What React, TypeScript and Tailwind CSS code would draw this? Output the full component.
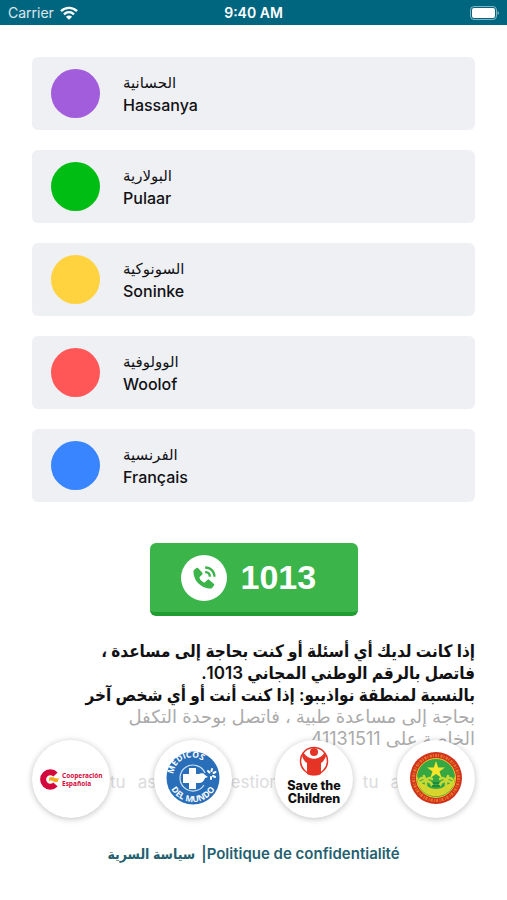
import { useId } from "react";
import { BiSolidPhoneCall } from "react-icons/bi";

const languages = [
    { arabic: "الحسانية", latin: "Hassanya", dot: "bg-[#a25ddc]" },
    { arabic: "البولارية", latin: "Pulaar", dot: "bg-[#00bd13]" },
    { arabic: "السونوكية", latin: "Soninke", dot: "bg-[#ffd33f]" },
    { arabic: "الوولوفية", latin: "Woolof", dot: "bg-[#ff5757]" },
    { arabic: "الفرنسية", latin: "Français", dot: "bg-[#3885ff]" }
];

function StatusBar() {
    return (
        <header className="grid h-[25px] grid-cols-3 items-center bg-[#00667f] px-2 text-sm text-white">
            <div className="flex items-center gap-1.5">
                <span className="text-white/85">Carrier</span>
                <svg viewBox="0 0 18 14" className="h-3.5 w-[18px]" fill="none" stroke="currentColor" strokeWidth="2.4">
                    <path d="M1 5.2C5.5.7 12.5.7 17 5.2" />
                    <path d="M4 8.3c2.9-2.7 7.1-2.7 10 0" />
                    <path d="M9 13.8 5.9 10.7c1.7-1.7 4.5-1.7 6.2 0Z" fill="currentColor" stroke="none" />
                </svg>
            </div>
            <span className="text-center font-semibold">9:40 AM</span>
            <svg viewBox="0 0 30 14" className="h-3.5 w-[30px] justify-self-end">
                <rect x="1.5" y="0.5" width="26" height="13" rx="3.5" fill="none" stroke="#fff" strokeOpacity="0.5" />
                <rect x="3" y="2" width="23" height="10" rx="2" fill="#fff" />
                <path d="M28.5 5v4c2-1 2-3 0-4Z" fill="#fff" fillOpacity="0.5" />
            </svg>
        </header>
    );
}

function CooperacionLogo() {
    return (
        <svg viewBox="0 0 78 78" className="size-full" role="img" aria-label="Cooperación Española">
            <path d="M23.5 34.5A7.200 7.200 0 1 0 23.500 44.500" fill="none" stroke="#d3073b" strokeWidth="6" />
            <path d="M17 38c4-3 6 2 10 0l-1.500 4c-4 1-5-3-8.500-1Z" fill="#f6a821" />
            <g fill="#d3073b" fontFamily="Open Sans, sans-serif" fontWeight="700" fontSize="6.5">
                <text x="30" y="38">Cooperación</text>
                <text x="30" y="46">Española</text>
            </g>
        </svg>
    );
}

function MedicosLogo() {
    const id = useId();
    return (
        <svg viewBox="0 0 78 78" className="size-full" role="img" aria-label="Médicos del Mundo">
            <defs>
                <path id={id + "top"} d="M21 43A18 18 0 0 1 54 28" />
                <path id={id + "bottom"} d="M14 37a25 25 0 0 0 50 0" />
            </defs>
            <circle cx="39" cy="38" r="26.5" fill="#286eb9" />
            <path d="M50 45a13 13 0 1 1 1-12" fill="none" stroke="#cfe4f6" strokeWidth="1.2" />
            <path d="M35 28h7v6h3c2-1 5-1 6 1l3 2-3 1c-1 3-3 5-6 5h-3v6h-7v-6h-6v-9h6Z" fill="#fff" />
            <g fill="none" stroke="#fff" strokeWidth="2" strokeLinecap="round">
                <path d="m58 29-.5 2M61.500 32l-2 1M61 37l-2-1M57 39v-2M54 31l1.500 1.500" />
            </g>
            <g fill="#fff" fontFamily="Open Sans, sans-serif" fontWeight="700" fontSize="8.5" textAnchor="middle">
                <text><textPath href={"#" + id + "top"} startOffset="50%">MÉDICOS</textPath></text>
                <text><textPath href={"#" + id + "bottom"} startOffset="50%">DEL MUNDO</textPath></text>
            </g>
        </svg>
    );
}

function SaveTheChildrenLogo() {
    return (
        <svg viewBox="0 0 78 78" className="size-full" role="img" aria-label="Save the Children">
            <circle cx="39" cy="21" r="13.5" fill="none" stroke="#e53426" strokeWidth="1.5" />
            <circle cx="39" cy="12" r="4" fill="#e53426" />
            <path d="M28 12c2 3 4 5 7 6 2 1 6 1 8 0 3-1 5-3 7-6l1 4c-1 3-3 6-5 7v11c-4 2-10 2-14 0V23c-2-1-4-4-5-7Z" fill="#e53426" />
            <g fill="#111" fontFamily="Inter, sans-serif" fontWeight="800" fontSize="12.5" textAnchor="middle">
                <text x="39" y="50">Save the</text>
                <text x="39" y="63">Children</text>
            </g>
        </svg>
    );
}

function MauritaniaSeal() {
    return (
        <svg viewBox="0 0 78 78" className="size-full" role="img" aria-label="الجمهورية الإسلامية الموريتانية">
            <circle cx="39" cy="38" r="26" fill="#d0321c" />
            <circle cx="39" cy="38" r="22.5" fill="none" stroke="#e8752a" strokeWidth="3" strokeDasharray="2 1 1 1.5" />
            <circle cx="39" cy="38" r="19.5" fill="#35a844" stroke="#efc52d" strokeWidth="1" />
            <path d="M20 36c0 27 38 27 38 0-2 5-5 8-9 9-3 3-7 4-10 4s-7-1-10-4c-4-1-7-4-9-9Z" fill="#d9d52c" />
            <path d="m39 21 2.200 6.500H48l-5.500 4 2.200 6.500-5.700-4-5.700 4 2.200-6.500-5.500-4h6.800Z" fill="#f7e52b" />
            <g fill="none" stroke="#c6d833" strokeWidth="2.5" strokeLinecap="round">
                <path d="M29 52V41m0 0c-1-3-4-4-6-2m6 2c1-3 4-4 6-2m-6 2c-3 0-6 1-7 4m7-4c3 0 5 1 6 4m-6-4-2-5" />
                <path d="M49 52V41m0 0c-1-3-4-4-6-2m6 2c1-3 4-4 6-2m-6 2c-3 0-5 1-6 4m6-4c3 0 6 1 7 4m-7-4 2-5" />
            </g>
            <path d="M36 43h6m-7 3h8" stroke="#187f37" strokeWidth="1.5" />
        </svg>
    );
}

const partners = [CooperacionLogo, MedicosLogo, SaveTheChildrenLogo, MauritaniaSeal];

export default function App() {
    return (
        <div className="min-h-screen bg-white font-['Inter','DejaVu_Sans',sans-serif] text-[#111114]">
            <StatusBar />
            <main className="px-8 pt-8">
                <div className="flex flex-col gap-5">
                    {languages.map((language) => (
                        <button key={language.latin} type="button" className="flex h-[73px] w-full items-center gap-[23px] rounded-md bg-[#eff0f4] px-[19px] text-left text-base font-medium leading-[22px]">
                            <span className={`size-[49px] shrink-0 rounded-full ${language.dot}`}></span>
                            <span className="flex flex-col items-start">
                                <span lang="ar" dir="rtl" className="text-[15px]">{language.arabic}</span>
                                <span>{language.latin}</span>
                            </span>
                        </button>
                    ))}
                </div>

                <a href="tel:1013" className="mx-auto mt-[41px] flex h-[73px] w-[208px] items-center gap-3.5 rounded-md border-b-4 border-[#209c31] bg-[#3bb44a] pl-[31px] text-white">
                    <span className="flex size-[46px] items-center justify-center rounded-full bg-white text-[#3bb44a]">
                        <BiSolidPhoneCall className="size-7" />
                    </span>
                    <span className="font-['Liberation_Sans',sans-serif] text-[34px] font-bold">1013</span>
                </a>

                <section className="relative mt-6">
                    <div lang="ar" dir="rtl" className="font-['Inter','DejaVu_Sans_Condensed','DejaVu_Sans',sans-serif] text-[17px] font-semibold leading-[22px]">
                        <p>إذا كانت لديك أي أسئلة أو كنت بحاجة إلى مساعدة ،<br />فاتصل بالرقم الوطني المجاني 1013.</p>
                        <p>بالنسبة لمنطقة نواذيبو: إذا كنت أنت أو أي شخص آخر</p>
                        <p className="font-['Inter','DejaVu_Sans',sans-serif] text-lg font-normal leading-[22px] text-[#aaaaaa]">بحاجة إلى مساعدة طبية ، فاتصل بوحدة التكفل<br />الخاصة على 41131511</p>
                    </div>
                    <div className="mt-5 flex justify-between pl-[78px] pr-[66px] text-[17px] leading-6 text-[#dcdcde]">
                        <p className="flex gap-3"><span>tu</span><span>as</span><span className="pl-[42px]">questions</span></p>
                        <p className="flex gap-3"><span>tu</span><span>as</span></p>
                    </div>
                    <div className="absolute inset-x-0 top-[100px] flex justify-between">
                        {partners.map((Logo, index) => (
                            <div key={index} className="size-[78px] overflow-hidden rounded-full bg-white shadow-[0_1px_6px_rgba(0,0,0,0.25)]">
                                <Logo />
                            </div>
                        ))}
                    </div>
                </section>
            </main>

            <footer className="mt-[50px] flex items-baseline justify-center font-['Inter','DejaVu_Sans_Condensed','DejaVu_Sans',sans-serif] text-[15px] font-semibold leading-5 text-[#255f70]">
                <a href="#privacy-ar" lang="ar" dir="rtl" className="text-sm leading-5">سياسة السرية</a>
                <span className="ml-1.5">|</span>
                <a href="#privacy-fr">Politique de confidentialité</a>
            </footer>
        </div>
    );
}
